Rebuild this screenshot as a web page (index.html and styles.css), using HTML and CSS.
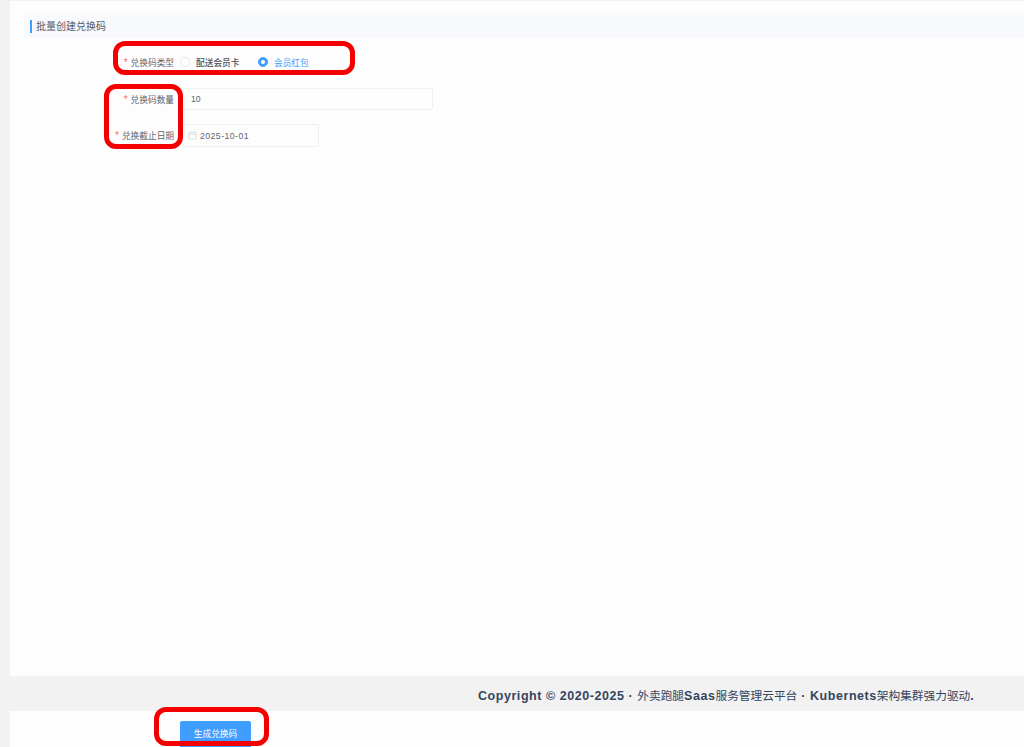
FILE: index.html
```html
<!DOCTYPE html>
<html lang="zh">
<head>
<meta charset="utf-8">
<title>批量创建兑换码</title>
<link rel="stylesheet" href="styles.css">
</head>
<body>
<main class="panel">
  <h2 class="section-title"><span>批量创建兑换码</span></h2>
  <form class="form">
    <div class="row row-type">
      <label class="label"><i>*</i>兑换码类型</label>
      <div class="radios">
        <span class="radio"><span class="dot"></span>配送会员卡</span>
        <span class="radio on"><span class="dot"></span>会员红包</span>
      </div>
    </div>
    <div class="row row-count">
      <label class="label"><i>*</i>兑换码数量</label>
      <div class="input wide">10</div>
    </div>
    <div class="row row-date">
      <label class="label"><i>*</i>兑换截止日期</label>
      <div class="input date">
        <svg class="cal" viewBox="0 0 10 10" width="9" height="9"><rect x="1" y="1.5" width="8" height="7.5" rx=".6" fill="none" stroke="#cfd2d8" stroke-width=".8"/><path d="M1 3.8h8M3 .6v1.6M7 .6v1.6" fill="none" stroke="#cfd2d8" stroke-width=".7"/></svg>
        2025-10-01
      </div>
    </div>
  </form>
</main>
<footer class="copyright">Copyright © 2020-2025 · <span class="cjk">外卖跑腿</span>Saas<span class="cjk">服务管理云平台</span> · Kubernets<span class="cjk">架构集群强力驱动</span>.</footer>
<section class="actions">
  <button class="submit" type="button">生成兑换码</button>
</section>
<div class="mark mark-a"></div>
<div class="mark mark-b"></div>
<div class="mark mark-c"></div>
</body>
</html>
```
FILE: styles.css
```css
* { box-sizing: border-box; }
html, body { height: 100%; }
body {
  margin: 0;
  height: 747px;
  overflow: hidden;
  background: #f2f2f2;
  display: flex;
  flex-direction: column;
  font-family: "Liberation Sans", "Noto Sans CJK SC", sans-serif;
  color: #5f6470;
  position: relative;
}
.panel {
  margin: 1px 0 0 10px;
  height: 676px;
  background: #fdfdfd;
  padding: 14px 0 0 14px;
}
.section-title {
  margin: 0;
  height: 23px;
  background: #f8f9fc;
  padding: 5px 0 0 6px;
  font-size: 10px;
  font-weight: 400;
  color: #555a66;
}
.section-title span {
  display: block;
  height: 13px;
  line-height: 13px;
  border-left: 2px solid #409eff;
  padding-left: 4px;
}
.row {
  display: flex;
  align-items: center;
  font-size: 8.7px;
}
.row-type { height: 24px; margin-top: 12px; }
.row-count { height: 22px; margin-top: 14px; }
.row-date { height: 23px; margin-top: 14px; }
.label {
  width: 150px;
  text-align: right;
  color: #5f6470;
  flex: none;
}
.label i {
  font-style: normal;
  color: #f56c6c;
  font-size: 10px;
  margin-right: 3px;
}
.radios { display: flex; margin-left: 6px; }
.radio {
  display: flex;
  align-items: center;
  color: #4a4e57;
  margin-right: 19px;
  font-weight: 500;
}
.dot {
  width: 10px;
  height: 10px;
  border-radius: 50%;
  border: 1px solid #e6e8ec;
  background: #fff;
  margin-right: 6px;
}
.radio.on { color: #409eff; font-weight: 400; }
.radio.on .dot {
  background: #409eff;
  border-color: #409eff;
  margin-right: 5.5px;
  position: relative;
}
.radio.on .dot::after {
  content: "";
  position: absolute;
  left: 2px;
  top: 2px;
  width: 4px;
  height: 4px;
  border-radius: 50%;
  background: #fff;
}
.input {
  margin-left: 8px;
  height: 100%;
  border: 1px solid #eff0f3;
  border-radius: 2px;
  background: #fdfdfd;
  display: flex;
  align-items: center;
  color: #5f6470;
  font-size: 8.7px;
}
.wide { width: 251px; padding-left: 8px; }
.date { width: 137px; padding-left: 5px; letter-spacing: .45px; }
.cal { margin-right: 3px; }
.copyright {
  height: 35px;
  line-height: 35px;
  padding: 2px 0 0 478px;
  font-size: 12.5px;
  font-weight: 700;
  letter-spacing: .55px;
  color: #34455e;
  white-space: nowrap;
}
.cjk { font-size: 11.7px; font-weight: 400; letter-spacing: 0; }
.actions {
  margin-left: 10px;
  flex: 1;
  background: #fdfdfd;
  padding: 10px 0 0 170px;
}
.submit {
  display: block;
  width: 71px;
  height: 26px;
  border: 0;
  border-radius: 2px 2px 0 0;
  background: #409eff;
  color: #fff;
  font: 8.7px "Liberation Sans", "Noto Sans CJK SC", sans-serif;
  padding: 0 0 2px;
}
.mark {
  position: absolute;
  border: 5px solid #f40000;
  border-radius: 12px;
}
.mark-a { left: 113px; top: 41px; width: 242px; height: 34px; }
.mark-b { left: 104px; top: 84px; width: 79px; height: 65px; }
.mark-c { left: 154px; top: 707px; width: 115px; height: 39px; }
```
